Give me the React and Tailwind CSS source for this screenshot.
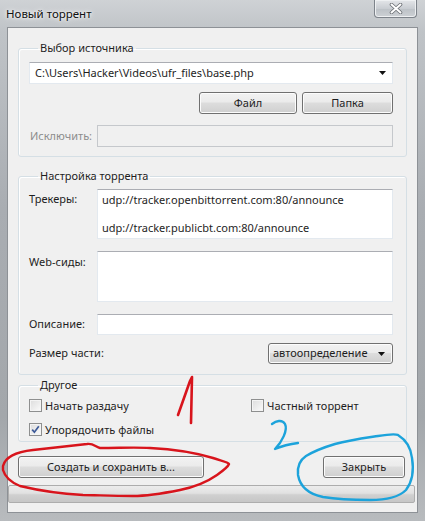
import React from "react";

const font = { fontFamily: '"Noto Sans", "Open Sans", sans-serif' };

function Btn({ children, className = "" }) {
  return (
    <div
      className={
        "h-[22px] rounded-[3px] border border-[#707070] bg-[linear-gradient(#f2f2f2_0%,#ebebeb_45%,#dddddd_50%,#cfcfcf_100%)] shadow-[inset_0_0_0_1px_#fcfcfc] flex items-center justify-center text-[#1e1e1e] " +
        className
      }
    >
      {children}
    </div>
  );
}

function Check({ checked, label }) {
  return (
    <div className="flex items-center gap-[3px] h-[13px]">
      <div className="w-[13px] h-[13px] border border-[#8e8f8f] bg-[linear-gradient(135deg,#dcdcdc,#fbfbfb)] shadow-[inset_0_0_0_1px_#f4f4f4] flex items-center justify-center">
        {checked && (
          <svg width="9" height="9" viewBox="0 0 9 9">
            <path d="M1.2 4.6 L3.4 7.2 L7.8 1.2" fill="none" stroke="#3d5a98" strokeWidth="1.7" />
          </svg>
        )}
      </div>
      <span className="leading-[13px] text-[#1e1e1e]">{label}</span>
    </div>
  );
}

function Group({ title, className = "", children }) {
  return (
    <fieldset
      className={
        "mx-[10px] w-[389px] rounded-[3px] border border-[#d5dfe5] shadow-[inset_1px_1px_0_#ffffff] " +
        className
      }
    >
      <legend className="ml-[9px] px-[2px] leading-[16px] text-[#1e1e1e]">{title}</legend>
      {children}
    </fieldset>
  );
}

export default function App() {
  return (
    <div
      className="relative w-[425px] h-[521px] overflow-hidden bg-[linear-gradient(180deg,#cfd2d5_0%,#bfc3c7_6%,#a9adb2_40%,#a3a7ab_80%,#b8bbbe_100%)] text-[11px]"
      style={font}
    >
      {/* title bar */}
      <div className="h-[27px] flex items-start relative">
        <div className="pl-[6px] pt-[5px] leading-[18px] text-[11.5px] text-[#111] [text-shadow:0_0_6px_#ffffff,0_0_3px_#ffffff]">
          Новый торрент
        </div>
        <div className="ml-auto mr-[8px] w-[43px] h-[18px] rounded-b-[4px] border border-t-0 border-[#7d838a] bg-[linear-gradient(#e4e6e9,#c9cdd2_50%,#bcc1c6_51%,#cdd1d5)] shadow-[inset_0_0_0_1px_#eef0f2] flex items-center justify-center">
          <svg width="14" height="11" viewBox="0 0 14 11">
            <path d="M2.5 1.5 L11.5 9.5 M11.5 1.5 L2.5 9.5" stroke="#6a6e73" strokeWidth="3.6" strokeLinecap="round" />
            <path d="M2.5 1.5 L11.5 9.5 M11.5 1.5 L2.5 9.5" stroke="#ffffff" strokeWidth="2" strokeLinecap="round" />
          </svg>
        </div>
      </div>

      {/* client area */}
      <div className="ml-[7px] w-[411px] h-[486px] border border-[#8d9196] bg-[#f0f0f0] flex flex-col">
        <Group title="Выбор источника" className="mt-[12px] pl-[10px] pr-[13px] pb-[9px]">
          <div className="mt-[6px] h-[22px] w-[364px] border border-[#e3e9ef] border-t-[#abadb3] bg-white flex items-center pl-[5px] pr-[6px]">
            <span className="text-[#1e1e1e]">C:\Users\Hacker\Videos\ufr_files\base.php</span>
            <svg className="ml-auto" width="7" height="4" viewBox="0 0 7 4">
              <path d="M0 0 L7 0 L3.5 4 Z" fill="#111" />
            </svg>
          </div>
          <div className="mt-[8px] flex justify-end gap-[5px]">
            <Btn className="w-[98px]">Файл</Btn>
            <Btn className="w-[91px]">Папка</Btn>
          </div>
          <div className="mt-[11px] flex items-center">
            <span className="w-[68px] pl-[1px] text-[#8d8d8d]">Исключить:</span>
            <div className="h-[22px] w-[296px] border border-[#c5c8cc] bg-[#f0f0f0]" />
          </div>
        </Group>

        <Group title="Настройка торрента" className="mt-[11px] pl-[10px] pr-[13px] pb-[10px]">
          <div className="mt-[5px] flex">
            <span className="w-[68px] pt-[3px] leading-[14px] text-[#1e1e1e]">Трекеры:</span>
            <div className="h-[50px] w-[296px] border border-[#e3e9ef] border-t-[#abadb3] bg-white pl-[4px] pt-[3px] leading-[14px] text-[#1e1e1e]">
              <div>udp://tracker.openbittorrent.com:80/announce</div>
              <div>&nbsp;</div>
              <div>udp://tracker.publicbt.com:80/announce</div>
            </div>
          </div>
          <div className="mt-[12px] flex">
            <span className="w-[68px] pt-[4px] leading-[14px] text-[#1e1e1e]">Web-сиды:</span>
            <div className="h-[51px] w-[296px] border border-[#e3e9ef] border-t-[#abadb3] bg-white" />
          </div>
          <div className="mt-[12px] flex items-center">
            <span className="w-[68px] text-[#1e1e1e]">Описание:</span>
            <div className="h-[21px] w-[296px] border border-[#e3e9ef] border-t-[#abadb3] bg-white" />
          </div>
          <div className="mt-[8px] flex items-center">
            <span className="text-[#1e1e1e]">Размер части:</span>
            <div className="ml-auto h-[21px] w-[125px] rounded-[3px] border border-[#707070] bg-[linear-gradient(#f2f2f2_0%,#ebebeb_45%,#dddddd_50%,#cfcfcf_100%)] shadow-[inset_0_0_0_1px_#fcfcfc] flex items-center pl-[4px] pr-[7px]">
              <span className="text-[#1e1e1e]">автоопределение</span>
              <svg className="ml-auto" width="7" height="4" viewBox="0 0 7 4">
                <path d="M0 0 L7 0 L3.5 4 Z" fill="#111" />
              </svg>
            </div>
          </div>
        </Group>

        <Group title="Другое" className="mt-[2px] pl-[10px] pr-[13px] pb-[5px]">
          <div className="mt-[6px] flex">
            <div className="w-[222px]">
              <Check label="Начать раздачу" />
            </div>
            <Check label="Частный торрент" />
          </div>
          <div className="mt-[11px]">
            <Check checked label="Упорядочить файлы" />
          </div>
        </Group>

        <div className="mt-[14px] pl-[10px] pr-[12px] flex items-center">
          <Btn className="w-[186px]">Создать и сохранить в...</Btn>
          <Btn className="ml-auto w-[82px]">Закрыть</Btn>
        </div>

        <div className="mt-[7px] ml-[0px] w-[407px] h-[18px] rounded-[2px] border border-[#adadad] bg-[linear-gradient(#ececec,#e1e1e1_45%,#d0d0d0_55%,#c6c6c6)]" />
      </div>

      {/* hand-drawn annotations */}
      <svg className="absolute left-0 top-0 pointer-events-none" width="425" height="521" viewBox="0 0 425 521">
        <path
          d="M3 466 C5 458 15 452 33 450 C50 448 70 446 87 444 C93 443 96 447 100 448 C120 448 135 447 150 448 C170 449 190 451 213 458 C222 461 228 462 229 464 C228 467 224 470 217 475 C207 482 195 487 180 490 C160 494 145 496 133 496 C110 496 95 495 83 495 C65 494 45 492 20 486 C10 482 5 477 3 470 Z"
          fill="none"
          stroke="#d8141c"
          strokeWidth="2.4"
          strokeLinejoin="round"
        />
        <path d="M178 415 L190 381 L192 377 L191 423" fill="none" stroke="#d8141c" strokeWidth="2.6" strokeLinecap="round" strokeLinejoin="round" />
        <path
          d="M272 424 C276 421 282 419 285 424 C288 430 282 442 275 449 C282 446 290 444 298 443"
          fill="none"
          stroke="#1ca3db"
          strokeWidth="2.4"
          strokeLinecap="round"
          strokeLinejoin="round"
        />
        <path
          d="M398 435 C406 440 411 448 412 458 C414 470 412 482 406 490 C398 498 385 500 370 500 C350 500 335 499 323 497 C308 494 300 486 298 475 C297 466 300 460 306 456 C316 450 325 447 335 444 C350 440 365 438 378 436 C390 434 396 434 398 435"
          fill="none"
          stroke="#1ca3db"
          strokeWidth="2.4"
          strokeLinecap="round"
          strokeLinejoin="round"
        />
      </svg>
    </div>
  );
}
